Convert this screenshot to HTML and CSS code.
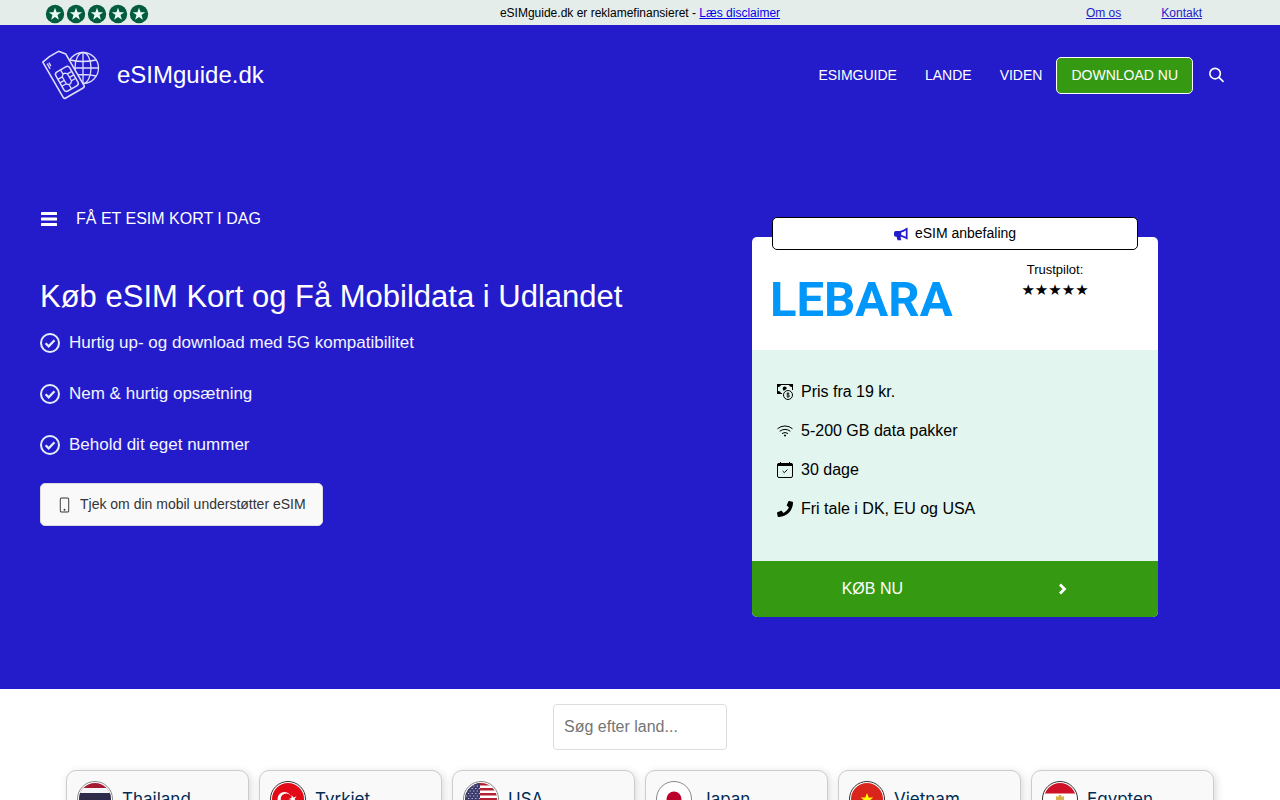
FILE: index.html
```html
<!DOCTYPE html>
<html lang="da">
<head>
    <meta charset="UTF-8">
    <meta name="viewport" content="width=device-width, initial-scale=1.0">
    <title>eSIMguide.dk</title>
    <link rel="stylesheet" href="styles.css">
</head>
<body>
    <!-- shapes used several times -->
    <svg class="sprite" aria-hidden="true">
        <symbol id="badge-star" viewBox="0 0 20 20">
            <circle cx="10" cy="10" r="9.2" fill="#045c40"/>
            <path fill="#e9fbf3" d="M10 3.8l1.6 4.5h4.6l-3.7 2.8 1.4 4.6-3.9-2.8-3.9 2.8 1.4-4.6-3.7-2.8h4.6z"/>
        </symbol>
        <symbol id="check" viewBox="0 0 20 20">
            <circle cx="10" cy="10" r="9" fill="none" stroke="currentColor" stroke-width="2"/>
            <path d="M5.6 10.2l3.1 3.1 5.8-6" fill="none" stroke="currentColor" stroke-width="2.3"/>
        </symbol>
    </svg>

    <div class="topbar">
        <div class="container topbar-inner">
            <div class="badges">
                <svg><use href="#badge-star"/></svg>
                <svg><use href="#badge-star"/></svg>
                <svg><use href="#badge-star"/></svg>
                <svg><use href="#badge-star"/></svg>
                <svg><use href="#badge-star"/></svg>
            </div>
            <div class="disclaimer">eSIMguide.dk er reklamefinansieret - <a href="#">Læs disclaimer</a></div>
            <div class="toplinks">
                <a href="#">Om os</a>
                <a href="#">Kontakt</a>
            </div>
        </div>
    </div>

    <div class="blue">
        <header class="container header">
            <a class="brand" href="#">
                <svg class="logo" viewBox="0 0 60 50" fill="none" stroke="#dedcff" stroke-width="1.3" stroke-linejoin="round">
                    <circle cx="43" cy="18" r="15.500"/>
                    <ellipse cx="43" cy="18" rx="8" ry="15.500"/>
                    <path d="M43 2.500v31M30 10q13 3 26 0M28 18h30.500M30 26q13-3 26 0"/>
                    <g transform="translate(23.500 25) rotate(-30)">
                        <path fill="#241ccb" stroke-width="1.600" d="M-11.500-21.500L-3-23 7.500-23 12.500-17V19a2 2 0 0 1-2 2h-20a2 2 0 0 1-2-2z"/>
                        <path d="M-8.500-18v6M-6.500-18v4"/>
                        <rect x="-7" y="-6" width="16" height="22" rx="3" stroke-width="1.500"/>
                        <path d="M-7 1h5l2-2v-5M9 1H4L2-1M-7 9h5l2 2v5M9 9H4l-2 2M-2 1v8M4 1v8M-7 5h5M4 5h5M0-1h2M0 11h2"/>
                    </g>
                </svg>
                <span>eSIMguide.dk</span>
            </a>
            <nav class="nav">
                <a href="#">ESIMGUIDE</a>
                <a href="#">LANDE</a>
                <a href="#">VIDEN</a>
                <a class="download" href="#">DOWNLOAD NU</a>
                <button class="search-btn" type="button" aria-label="Søg">
                    <svg viewBox="0 0 16 16" fill="none" stroke="currentColor" stroke-width="1.700" stroke-linecap="round">
                        <circle cx="6.500" cy="6.500" r="5.600"/>
                        <path d="M10.600 10.600l4.400 4.200"/>
                    </svg>
                </button>
            </nav>
        </header>

        <section class="container hero">
            <div class="intro">
                <div class="eyebrow">
                    <svg viewBox="0 0 18 16" fill="currentColor">
                        <rect x="1" y="1" width="16" height="3" rx=".5"/>
                        <rect x="1" y="6.500" width="16" height="3" rx=".5"/>
                        <rect x="1" y="12" width="16" height="3" rx=".5"/>
                    </svg>
                    <span>FÅ ET ESIM KORT I DAG</span>
                </div>
                <h1>Køb eSIM Kort og Få Mobildata i Udlandet</h1>
                <ul class="benefits">
                    <li><svg><use href="#check"/></svg>Hurtig up- og download med 5G kompatibilitet</li>
                    <li><svg><use href="#check"/></svg>Nem &amp; hurtig opsætning</li>
                    <li><svg><use href="#check"/></svg>Behold dit eget nummer</li>
                </ul>
                <a class="check-btn" href="#">
                    <svg viewBox="0 0 16 16" fill="currentColor">
                        <path d="M11 1a1 1 0 0 1 1 1v12a1 1 0 0 1-1 1H5a1 1 0 0 1-1-1V2a1 1 0 0 1 1-1h6zM5 0a2 2 0 0 0-2 2v12a2 2 0 0 0 2 2h6a2 2 0 0 0 2-2V2a2 2 0 0 0-2-2H5z"/>
                        <circle cx="8" cy="13" r="1"/>
                    </svg>
                    Tjek om din mobil understøtter eSIM
                </a>
            </div>

            <div class="card">
                <div class="card-label">
                    <svg viewBox="0 0 16 16">
                        <path fill="currentColor" d="M13.500 1.500l2-1v14l-2-1C11 12 9.500 11.300 7.500 11l.8 4H4L3 11H2a2 2 0 0 1-2-2V6.500a2 2 0 0 1 2-2h5C9 4.300 11.500 3 13.500 1.500z"/>
                        <path fill="#fff" d="M13.500 4v7.200C11.800 10 10 9.300 8.300 9V6.300c1.800-.4 3.600-1.200 5.200-2.300z"/>
                    </svg>
                    eSIM anbefaling
                </div>
                <div class="card-head">
                    <div class="provider">LEBARA</div>
                    <div class="rating">
                        <div>Trustpilot:</div>
                        <div class="stars">★★★★★</div>
                    </div>
                </div>
                <ul class="features">
                    <li>
                        <svg viewBox="0 0 16 16">
                            <path fill="none" stroke="currentColor" d="M15.500 6V.500H.500v9H5"/>
                            <path fill="currentColor" d="M0 0h4a3 3 0 0 1-3 3H0zM16 0h-4a3 3 0 0 0 3 3h1zM0 10V7h1a3 3 0 0 1 3 3zM6 5.500a2 2 0 1 1 3.700-.8L6.800 6.800A2 2 0 0 1 6 5.500z"/>
                            <circle cx="11" cy="11" r="4.500" fill="none" stroke="currentColor"/>
                            <path fill="none" stroke="currentColor" stroke-width=".8" d="M12.500 9.800c-.3-.7-2.900-.9-2.900.2 0 1.200 3 .7 3 2 0 1.200-2.800 1-3.100 0M11 8.300v5.500"/>
                        </svg>
                        Pris fra 19 kr.
                    </li>
                    <li>
                        <svg viewBox="0 0 16 16" fill="none" stroke="currentColor" stroke-linecap="round">
                            <path d="M.800 5.500a11 11 0 0 1 14.400 0M3 8a8 8 0 0 1 10 0M5.300 10.300a4.800 4.800 0 0 1 5.400 0"/>
                            <circle cx="8" cy="12.500" r="1" fill="currentColor" stroke="none"/>
                        </svg>
                        5-200 GB data pakker
                    </li>
                    <li>
                        <svg viewBox="0 0 16 16" fill="none" stroke="currentColor">
                            <rect x=".5" y="1.500" width="15" height="14" rx="1.500"/>
                            <path fill="currentColor" d="M1 1.500h14v2H1zM3.500 0v2M12.500 0v2"/>
                            <path d="M5.600 9l1.700 1.700 3.100-3.100"/>
                        </svg>
                        30 dage
                    </li>
                    <li>
                        <svg viewBox="0 0 512 512" fill="currentColor">
                            <path d="M493.400 24.600l-104-24c-11.300-2.600-22.900 3.300-27.500 13.900l-48 112c-4.200 9.800-1.400 21.300 6.900 28l60.600 49.600c-36 76.700-98.900 140.500-177.200 177.200l-49.600-60.600c-6.800-8.300-18.200-11.100-28-6.900l-112 48C3.900 366.500-2 378.100.600 389.400l24 104C27.100 504.200 36.700 512 48 512c256.100 0 464-207.500 464-464 0-11.200-7.700-20.900-18.600-23.400z"/>
                        </svg>
                        Fri tale i DK, EU og USA
                    </li>
                </ul>
                <a class="buy" href="#">
                    <span>KØB NU</span>
                    <svg viewBox="0 0 10 12" fill="none" stroke="currentColor" stroke-width="2.800"><path d="M2 1.500L6.500 6 2 10.500"/></svg>
                </a>
            </div>
        </section>
    </div>

    <main class="countries">
        <input class="country-search" type="text" placeholder="Søg efter land..." aria-label="Søg efter land">
        <div class="country-grid">
            <a class="country" href="#">
                <svg viewBox="0 0 32 32">
                    <rect width="32" height="32" fill="#a51931"/>
                    <rect y="5" width="32" height="22" fill="#f4f5f8"/>
                    <rect y="10" width="32" height="12" fill="#2d2a4a"/>
                </svg>
                Thailand
            </a>
            <a class="country dark" href="#">
                <svg viewBox="0 0 32 32">
                    <rect width="32" height="32" fill="#e30a17"/>
                    <circle cx="12.500" cy="16" r="7" fill="#fff"/>
                    <circle cx="14.300" cy="16" r="5.600" fill="#e30a17"/>
                    <path fill="#fff" d="M16.500 16l3-1 .1-3.100 1.800 2.500 3-.9-1.800 2.500 1.800 2.500-3-.9-1.800 2.500-.1-3.100z"/>
                </svg>
                Tyrkiet
            </a>
            <a class="country" href="#">
                <svg viewBox="0 0 32 32">
                    <rect width="32" height="32" fill="#fff"/>
                    <path stroke="#b22234" stroke-width="2.500" d="M0 1.300h32M0 6.300h32M0 11.300h32M0 16.300h32M0 21.300h32M0 26.300h32M0 31.300h32"/>
                    <rect width="15" height="17.500" fill="#3c3b6e"/>
                    <path stroke="#c8c8dc" stroke-width="1.200" stroke-dasharray="1.200 2.400" d="M1 3h14M3 5.500h12M1 8h14M3 10.500h12M1 13h14M3 15.500h12"/>
                </svg>
                USA
            </a>
            <a class="country" href="#">
                <svg viewBox="0 0 32 32">
                    <rect width="32" height="32" fill="#fff"/>
                    <circle cx="16" cy="16" r="7.500" fill="#bc002d"/>
                </svg>
                Japan
            </a>
            <a class="country dark" href="#">
                <svg viewBox="0 0 32 32">
                    <rect width="32" height="32" fill="#da251d"/>
                    <path fill="#ff0" d="M16 10l1.700 4.500h4.600l-3.700 2.900 1.400 4.600-4-2.800-4 2.800 1.400-4.600-3.700-2.900h4.600z"/>
                </svg>
                Vietnam
            </a>
            <a class="country dark" href="#">
                <svg viewBox="0 0 32 32">
                    <rect width="32" height="32" fill="#fff"/>
                    <rect width="32" height="10.500" fill="#ce1126"/>
                    <rect y="21.500" width="32" height="10.500" fill="#111"/>
                    <path fill="#d9b44a" d="M12 13l2 1 1-2h2l1 2 2-1v5l-2 2h-4l-2-2z"/>
                </svg>
                Egypten
            </a>
        </div>
    </main>
</body>
</html>
```

FILE: styles.css
```css
* {
    box-sizing: border-box;
}

body {
    margin: 0;
    font-family: "Liberation Sans", Arial, sans-serif;
    font-size: 16px;
    color: #000;
    background-color: #fff;
    overflow-x: hidden;
}

a {
    text-decoration: none;
}

ul {
    list-style: none;
    margin: 0;
    padding: 0;
}

.sprite {
    display: none;
}

.container {
    max-width: 1280px;
    margin: 0 auto;
    padding: 0 40px;
}

/* top bar */
.topbar {
    background-color: #e4edea;
    font-size: 12px;
}

.topbar-inner {
    display: grid;
    grid-template-columns: 1fr auto 1fr;
    align-items: center;
    height: 25px;
}

.topbar a {
    color: #241ccb;
    text-decoration: underline;
}

.topbar .disclaimer a {
    color: #0000ee;
}

.badges {
    display: flex;
    gap: 1px;
    padding: 2px 0 0 5px;
}

.badges svg {
    width: 20px;
    height: 20px;
}

.toplinks {
    display: flex;
    justify-content: flex-end;
    gap: 40px;
    padding-right: 38px;
}

/* header */
.blue {
    background-color: #241ccb;
    color: #fff;
}

.header {
    display: flex;
    justify-content: space-between;
    align-items: center;
    height: 100px;
}

.brand {
    display: flex;
    align-items: center;
    gap: 17px;
    color: #fff;
    font-size: 24px;
}

.logo {
    width: 60px;
    height: 50px;
}

.nav {
    display: flex;
    align-items: center;
    font-size: 14px;
}

.nav a {
    color: #fff;
    padding: 0 14px;
}

.nav .download {
    background-color: #369912;
    border: 1px solid #fff;
    border-radius: 5px;
    line-height: 35px;
}

.search-btn {
    display: flex;
    padding: 0 16px;
    border: none;
    background: none;
    color: #fff;
    cursor: pointer;
}

.search-btn svg {
    width: 15px;
    height: 16px;
}

/* hero */
.hero {
    display: grid;
    grid-template-columns: 712fr 406fr 82fr;
    align-items: start;
    padding-top: 82px;
    padding-bottom: 72px;
}

.eyebrow {
    display: flex;
    align-items: center;
    gap: 18px;
    line-height: 24px;
}

.eyebrow svg {
    width: 18px;
    height: 16px;
}

h1 {
    margin: 46px 0 12px;
    font-size: 31px;
    font-weight: normal;
    line-height: 40px;
}

.benefits {
    display: grid;
    gap: 23px;
    margin-bottom: 24px;
    font-size: 17px;
    line-height: 28px;
}

.benefits li {
    display: flex;
    align-items: center;
    gap: 9px;
    color: #f4f4ff;
}

.benefits svg {
    width: 20px;
    height: 20px;
    color: #e4edfa;
}

.check-btn {
    display: inline-flex;
    align-items: center;
    gap: 8px;
    padding: 0 16px;
    border: 1px solid #ddd;
    border-radius: 5px;
    background-color: #f9f9f9;
    color: #333;
    font-size: 14px;
    line-height: 41px;
}

.check-btn svg {
    width: 15px;
    height: 16px;
}

/* offer card */
.card {
    position: relative;
    margin-top: 30px;
    border-radius: 5px;
    background-color: #fff;
    color: #000;
}

.card-label {
    position: absolute;
    top: -20px;
    left: 20px;
    right: 20px;
    display: flex;
    justify-content: center;
    align-items: center;
    gap: 7px;
    border: 1px solid #000;
    border-radius: 5px;
    background-color: #fff;
    font-size: 14px;
    line-height: 31px;
}

.card-label svg {
    width: 14px;
    height: 14px;
    color: #241ccb;
}

.card-head {
    display: grid;
    grid-template-columns: 1fr 1fr;
    height: 113px;
    padding: 23px 8px 0 18px;
}

.provider {
    color: #0096fa;
    font-family: Roboto, sans-serif;
    font-size: 49px;
    font-weight: bold;
    line-height: 80px;
}

.rating {
    font-size: 13px;
    line-height: 20px;
    text-align: center;
}

.stars {
    font-family: "DejaVu Sans", sans-serif;
    font-size: 15px;
}

.features {
    display: grid;
    gap: 15px;
    padding: 30px 25px 40px;
    background-color: #e2f5ee;
    line-height: 24px;
}

.features li {
    display: flex;
    align-items: center;
    gap: 8px;
}

.features svg {
    width: 16px;
    height: 16px;
}

.buy {
    display: flex;
    justify-content: space-around;
    align-items: center;
    height: 56px;
    padding: 0 12px;
    border-radius: 0 0 5px 5px;
    background-color: #369912;
    color: #fff;
}

.buy svg {
    width: 10px;
    height: 12px;
}

/* countries */
.countries {
    display: flex;
    flex-direction: column;
    align-items: center;
    gap: 20px;
    padding: 15px 66px 40px;
}

.country-search {
    width: 174px;
    height: 46px;
    padding: 0 10px;
    border: 1px solid #ddd;
    border-radius: 4px;
    font-family: inherit;
    font-size: 16px;
}

.country-search::placeholder {
    color: #757575;
}

.country-grid {
    display: grid;
    grid-template-columns: repeat(6, 1fr);
    gap: 10px;
    width: 100%;
}

.country {
    display: flex;
    align-items: center;
    gap: 9px;
    padding: 10px;
    border: 1px solid #ccc;
    border-radius: 10px;
    background-color: #f9f9f9;
    box-shadow: 2px 2px 8px rgba(0, 0, 0, 0.15);
    color: #002b54;
    font-family: Inter, sans-serif;
    font-size: 17px;
    line-height: 20px;
}

.country svg {
    width: 36px;
    height: 36px;
    padding: 1px;
    border: 1px solid #888;
    border-radius: 50%;
    background-color: #fff;
}

.country.dark svg {
    border-color: #333;
}
```
